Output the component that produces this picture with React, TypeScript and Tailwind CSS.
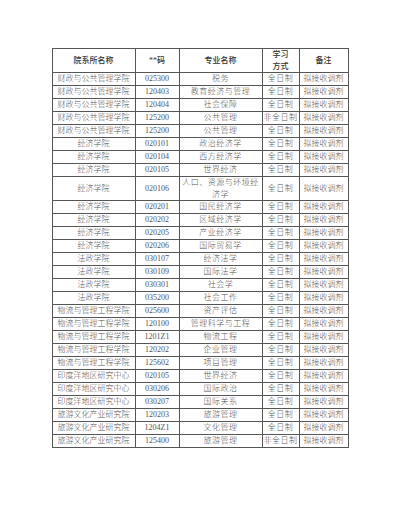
const rows: [string, string, string, string][] = [
  ["财政与公共管理学院", "025300", "税务", "全日制"],
  ["财政与公共管理学院", "120403", "教育经济与管理", "全日制"],
  ["财政与公共管理学院", "120404", "社会保障", "全日制"],
  ["财政与公共管理学院", "125200", "公共管理", "非全日制"],
  ["财政与公共管理学院", "125200", "公共管理", "全日制"],
  ["经济学院", "020101", "政治经济学", "全日制"],
  ["经济学院", "020104", "西方经济学", "全日制"],
  ["经济学院", "020105", "世界经济", "全日制"],
  ["经济学院", "020106", "人口、资源与环境经济学", "全日制"],
  ["经济学院", "020201", "国民经济学", "全日制"],
  ["经济学院", "020202", "区域经济学", "全日制"],
  ["经济学院", "020205", "产业经济学", "全日制"],
  ["经济学院", "020206", "国际贸易学", "全日制"],
  ["法政学院", "030107", "经济法学", "全日制"],
  ["法政学院", "030109", "国际法学", "全日制"],
  ["法政学院", "030301", "社会学", "全日制"],
  ["法政学院", "035200", "社会工作", "全日制"],
  ["物流与管理工程学院", "025600", "资产评估", "全日制"],
  ["物流与管理工程学院", "120100", "管理科学与工程", "全日制"],
  ["物流与管理工程学院", "1201Z1", "物流工程", "全日制"],
  ["物流与管理工程学院", "120202", "企业管理", "全日制"],
  ["物流与管理工程学院", "125602", "项目管理", "全日制"],
  ["印度洋地区研究中心", "020105", "世界经济", "全日制"],
  ["印度洋地区研究中心", "030206", "国际政治", "全日制"],
  ["印度洋地区研究中心", "030207", "国际关系", "全日制"],
  ["旅游文化产业研究院", "120203", "旅游管理", "全日制"],
  ["旅游文化产业研究院", "1204Z1", "文化管理", "全日制"],
  ["旅游文化产业研究院", "125400", "旅游管理", "非全日制"],
];

const cell =
  "flex items-center justify-center text-center border-r border-b border-[#555] px-[1px] leading-[12px]";

export default function App() {
  return (
    <div className="w-[400px] h-[510px] bg-white pt-[48px] font-['Liberation_Serif','Noto_Sans_CJK_SC',serif] font-light text-[8px] text-[#555]">
      <div className="mx-auto w-[297px] grid grid-cols-[83px_44px_83px_37px_49px] border-l border-t border-[#555]">
        <div className={`${cell} h-[24px] font-medium text-[#333]`}>院系所名称</div>
        <div className={`${cell} h-[24px] font-medium text-[#333]`}>**码</div>
        <div className={`${cell} h-[24px] font-medium text-[#333]`}>专业名称</div>
        <div className={`${cell} h-[24px] font-medium text-[#333] leading-[11px]`}>
          学习
          <br />
          方式
        </div>
        <div className={`${cell} h-[24px] font-medium text-[#333]`}>备注</div>
        {rows.map(([dept, code, major, mode], i) => {
          const h = major.length > 10 ? "h-[24px]" : "h-[13px]";
          return (
            <div key={i} className="contents">
              <div className={`${cell} ${h}`}>{dept}</div>
              <div className={`${cell} ${h} font-normal`}>{code}</div>
              <div className={`${cell} ${h} tracking-[0.5px]`}>{major}</div>
              <div className={`${cell} ${h} tracking-[0.5px]`}>{mode}</div>
              <div className={`${cell} ${h}`}>拟接收调剂</div>
            </div>
          );
        })}
      </div>
    </div>
  );
}
